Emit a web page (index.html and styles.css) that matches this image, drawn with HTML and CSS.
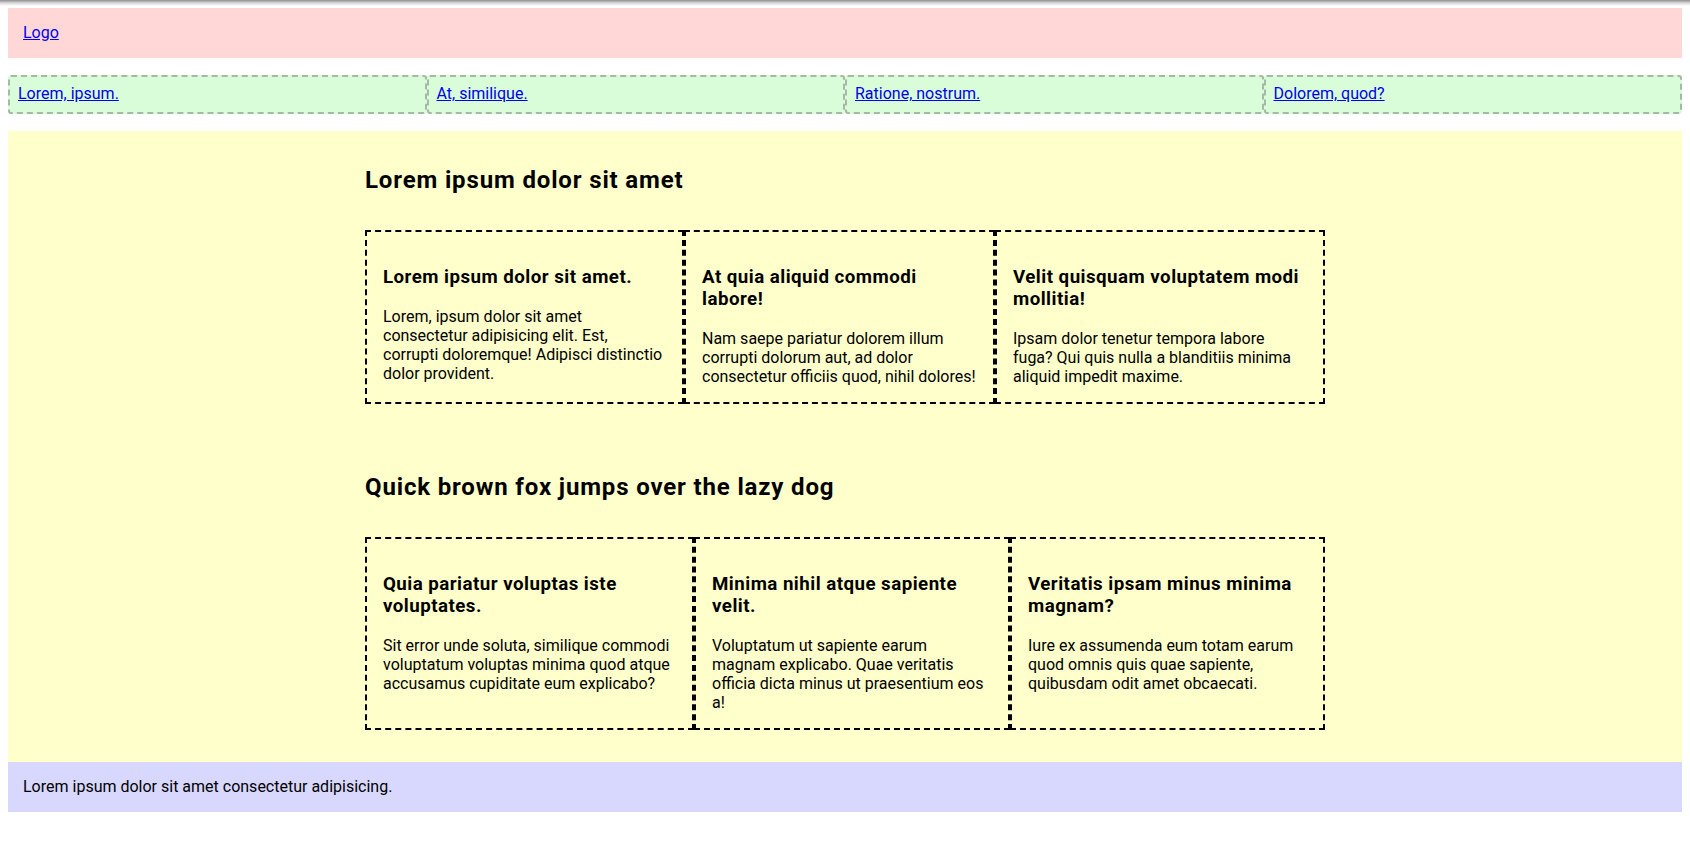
FILE: index.html
```html
<!DOCTYPE html>
<html lang="en">
<head>
<meta charset="utf-8">
<title>Layout</title>
<link rel="stylesheet" href="styles.css">
</head>
<body>
<header class="site-header">
  <a href="#" class="logo">Logo</a>
</header>
<nav class="site-nav">
  <div class="nav-item"><a href="#">Lorem, ipsum.</a></div>
  <div class="nav-item"><a href="#">At, similique.</a></div>
  <div class="nav-item"><a href="#">Ratione, nostrum.</a></div>
  <div class="nav-item"><a href="#">Dolorem, quod?</a></div>
</nav>
<main class="site-main">
  <section class="feature">
    <div class="container">
      <h2 class="feature-title">Lorem ipsum dolor sit amet</h2>
      <div class="cards cards-first">
        <article class="card">
          <h3 class="card-title">Lorem ipsum dolor sit amet.</h3>
          <p class="card-text">Lorem, ipsum dolor sit amet consectetur adipisicing elit. Est, corrupti doloremque! Adipisci distinctio dolor provident.</p>
        </article>
        <article class="card">
          <h3 class="card-title">At quia aliquid commodi labore!</h3>
          <p class="card-text">Nam saepe pariatur dolorem illum corrupti dolorum aut, ad dolor consectetur officiis quod, nihil dolores!</p>
        </article>
        <article class="card">
          <h3 class="card-title">Velit quisquam voluptatem modi mollitia!</h3>
          <p class="card-text">Ipsam dolor tenetur tempora labore fuga? Qui quis nulla a blanditiis minima aliquid impedit maxime.</p>
        </article>
      </div>
    </div>
  </section>
  <section class="feature">
    <div class="container">
      <h2 class="feature-title">Quick brown fox jumps over the lazy dog</h2>
      <div class="cards cards-second">
        <article class="card">
          <h3 class="card-title">Quia pariatur voluptas iste voluptates.</h3>
          <p class="card-text">Sit error unde soluta, similique commodi voluptatum voluptas minima quod atque accusamus cupiditate eum explicabo?</p>
        </article>
        <article class="card">
          <h3 class="card-title">Minima nihil atque sapiente velit.</h3>
          <p class="card-text">Voluptatum ut sapiente earum magnam explicabo. Quae veritatis officia dicta minus ut praesentium eos a!</p>
        </article>
        <article class="card">
          <h3 class="card-title">Veritatis ipsam minus minima magnam?</h3>
          <p class="card-text">Iure ex assumenda eum totam earum quod omnis quis quae sapiente, quibusdam odit amet obcaecati.</p>
        </article>
      </div>
    </div>
  </section>
</main>
<footer class="site-footer">
  Lorem ipsum dolor sit amet consectetur adipisicing.
</footer>
</body>
</html>
```

FILE: styles.css
```css
html {
  background: #fff linear-gradient(to bottom, #8f8f8f 0, #d8d8d8 3px, #ffffff 6px) no-repeat;
  background-size: 100% 6px;
}

body {
  margin: 8px;
  font-family: Roboto, "Liberation Sans", sans-serif;
  font-size: 16px;
  line-height: 1.15;
  color: #000;
}

a {
  color: #0000ee;
}

.site-header {
  background: #ffd7d7;
  padding: 16px 15px;
}

.site-nav {
  display: grid;
  grid-template-columns: repeat(4, 1fr);
  margin: 17px 0;
}

.nav-item {
  background: #d8fdd8;
  border: 2px dashed #a6b8a6;
  border-radius: 3px;
  padding: 8px 8px;
}

.site-main {
  background: #ffffcc;
  display: flex;
  flex-direction: column;
  padding-bottom: 32px;
}

.feature + .feature {
  margin-top: 34px;
}

.container {
  width: 960px;
  margin: 0 auto;
}

.feature-title {
  font-size: 24px;
  line-height: 1.15;
  letter-spacing: 0.85px;
  margin: 36px 0;
}

.cards {
  display: grid;
  grid-template-columns: repeat(3, auto);
}

.cards-first {
  grid-template-columns: 319px 311px 1fr;
}

.cards-second {
  grid-template-columns: 329px 316px 1fr;
}

.card {
  border: 2px dashed #000;
  padding: 16px;
}

.card-title {
  font-size: 18.72px;
  line-height: 1.15;
  letter-spacing: 0.47px;
  margin: 18.72px 0;
}

.card-text {
  margin: 0;
  line-height: 19px;
}

.site-footer {
  background: #d8d8ff;
  padding: 16px 15px;
}
```
